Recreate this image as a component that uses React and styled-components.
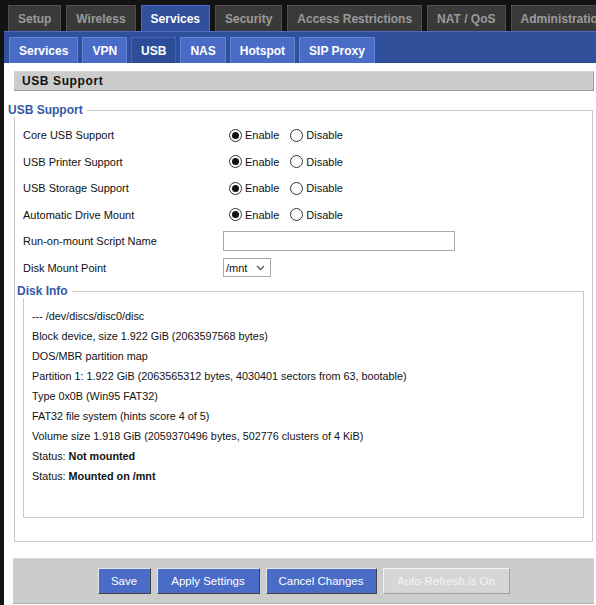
import React from 'react'
import styled, {createGlobalStyle} from 'styled-components'

const GlobalStyle = createGlobalStyle`
    html, body {
        margin: 0;
        padding: 0;
        background: #131313;
    }
    body {
        font-family: "Liberation Sans", Arial, sans-serif;
        font-size: 11px;
        color: #111;
    }
`

const topTabs = ['Setup', 'Wireless', 'Services', 'Security', 'Access Restrictions', 'NAT / QoS', 'Administration']
const subTabs = ['Services', 'VPN', 'USB', 'NAS', 'Hotspot', 'SIP Proxy']

const options = [
    'Core USB Support',
    'USB Printer Support',
    'USB Storage Support',
    'Automatic Drive Mount',
]

const diskLines = [
    ['--- /dev/discs/disc0/disc'],
    ['Block device, size 1.922 GiB (2063597568 bytes)'],
    ['DOS/MBR partition map'],
    ['Partition 1: 1.922 GiB (2063565312 bytes, 4030401 sectors from 63, bootable)'],
    ['Type 0x0B (Win95 FAT32)'],
    ['FAT32 file system (hints score 4 of 5)'],
    ['Volume size 1.918 GiB (2059370496 bytes, 502776 clusters of 4 KiB)'],
    ['Status: ', 'Not mounted'],
    ['Status: ', 'Mounted on /mnt'],
]

const buttons = [
    {text: 'Save', w: 53},
    {text: 'Apply Settings', w: 103},
    {text: 'Cancel Changes', w: 111},
    {text: 'Auto-Refresh is On', w: 127, off: true},
]

const Page = styled.div`
    padding-left: 4px;
    min-height: 605px;
    display: flex;
    flex-direction: column;
`

const TopBar = styled.nav`
    display: flex;
    gap: 5px;
    padding: 5px 0 0 4px;
    overflow: hidden;
    white-space: nowrap;
`

const TopTab = styled.div`
    flex: none;
    height: 25px;
    padding: 0 9px;
    display: flex;
    align-items: center;
    font-weight: bold;
    font-size: 12px;
    color: ${p => p.$active ? '#fff' : '#9a9a9a'};
    background: ${p => p.$active ? '#30509c' : '#3a3a3a'};
    border: 1px solid ${p => p.$active ? '#4a6cc7' : '#4e4e4e'};
    border-bottom: none;
    margin-bottom: ${p => p.$active ? -1 : 0}px;
    position: relative;
`

const SubBar = styled.nav`
    display: flex;
    gap: 4px;
    height: 32px;
    box-sizing: border-box;
    padding: 5px 0 0 5px;
    background: #30509c;
    border-top: 1px solid #4a6cc7;
`

const SubTab = styled.div`
    height: 26px;
    box-sizing: border-box;
    padding: 0 9px;
    display: flex;
    align-items: center;
    font-weight: bold;
    font-size: 12px;
    color: #fff;
    background: ${p => p.$active ? '#2e4d98' : '#4a6cc7'};
    border: 1px solid ${p => p.$active ? '#4464b8' : '#6283d6'};
    border-bottom: none;
`

const Main = styled.main`
    flex: 1;
    background: #fff;
    padding: 8px 2px 4px 10px;
    display: flex;
    flex-direction: column;
`

const Heading = styled.h2`
    margin: 0;
    height: 20px;
    box-sizing: border-box;
    padding-left: 8px;
    display: flex;
    align-items: center;
    background: #cccccc;
    border-top: 1px solid #d8d8d8;
    border-right: 1px solid #999;
    border-bottom: 1px solid #999;
    font-size: 12px;
    font-weight: bold;
    letter-spacing: 0.6px;
    color: #111;
`

const Fieldset = styled.fieldset`
    margin: ${p => p.$nested ? '3px 0 0 0' : '12px 1px 0 0'};
    padding: ${p => p.$nested ? '8px 8px 31px 8px' : '5px 8px 23px 8px'};
    border: 1px solid #c8c8c8;
    min-width: 0;
`

const Legend = styled.legend`
    margin-left: -15px;
    padding: 0 4px 0 0;
    font-size: 12px;
    font-weight: bold;
    color: #3458a8;
`

const Row = styled.div`
    display: flex;
    align-items: center;
    height: 26.5px;
`

const Label = styled.div`
    width: 200px;
    flex: none;
`

const RadioLabel = styled.label`
    display: inline-flex;
    align-items: center;
    margin-right: 5px;
`

const Radio = styled.input`
    appearance: none;
    margin: 0 3px 0 6px;
    width: 13px;
    height: 13px;
    box-sizing: border-box;
    border: 1px solid #333;
    border-radius: 50%;
    background: #fff;
    display: grid;
    place-items: center;
    &:checked::after {
        content: "";
        width: 7px;
        height: 7px;
        border-radius: 50%;
        background: #111;
    }
`

const TextInput = styled.input`
    width: 232px;
    height: 20px;
    box-sizing: border-box;
    border: 1px solid #a9a9a9;
    padding: 0 3px;
    font: inherit;
`

const SelectWrap = styled.div`
    position: relative;
    width: 48px;
    height: 19px;
`

const Select = styled.select`
    appearance: none;
    width: 100%;
    height: 100%;
    box-sizing: border-box;
    border: 1px solid #a9a9a9;
    background: #fff;
    padding: 0 0 0 2px;
    font: inherit;
    color: #111;
`

const Chevron = styled.svg`
    position: absolute;
    right: 6px;
    top: 7px;
    pointer-events: none;
`

const DiskLine = styled.div`
    line-height: 20px;
    white-space: nowrap;
    font-size: 10.8px;
    b {
        font-weight: bold;
    }
`

const ButtonBar = styled.div`
    margin: 16px 0 0 -1px;
    height: 44px;
    display: flex;
    align-items: center;
    justify-content: center;
    gap: 6px;
    background: #cccccc;
    border-top: 1px solid #dadada;
    border-bottom: 1px solid #b4b4b4;
`

const Button = styled.button`
    width: ${p => p.$w}px;
    height: 26px;
    padding: 0;
    font-family: "Liberation Sans", Arial, sans-serif;
    font-size: 11.5px;
    color: ${p => p.$off ? '#f4f4f4' : '#fff'};
    background: ${p => p.$off ? '#d6d6d6' : '#4a6cc7'};
    border: 1px solid;
    border-color: ${p => p.$off ? '#f2f2f2 #a0a0a0 #a0a0a0 #f2f2f2' : '#e6e6e6 #444 #444 #e6e6e6'};
`

const App = () => {
    return (
        <>
            <GlobalStyle/>
            <Page>
                <TopBar>
                    {topTabs.map(t => (
                        <TopTab key={t} $active={t === 'Services'}>{t}</TopTab>
                    ))}
                </TopBar>
                <SubBar>
                    {subTabs.map(t => (
                        <SubTab key={t} $active={t === 'USB'}>{t}</SubTab>
                    ))}
                </SubBar>
                <Main>
                    <Heading>USB Support</Heading>
                    <Fieldset>
                        <Legend>USB Support</Legend>
                        {options.map(o => (
                            <Row key={o}>
                                <Label>{o}</Label>
                                <RadioLabel>
                                    <Radio type="radio" name={o} defaultChecked/>Enable
                                </RadioLabel>
                                <RadioLabel>
                                    <Radio type="radio" name={o}/>Disable
                                </RadioLabel>
                            </Row>
                        ))}
                        <Row>
                            <Label>Run-on-mount Script Name</Label>
                            <TextInput type="text"/>
                        </Row>
                        <Row>
                            <Label>Disk Mount Point</Label>
                            <SelectWrap>
                                <Select defaultValue="/mnt">
                                    <option>/mnt</option>
                                </Select>
                                <Chevron width="9" height="6" viewBox="0 0 9 6">
                                    <path d="M1 1l3.5 3.5L8 1" fill="none" stroke="#555" strokeWidth="1.3"/>
                                </Chevron>
                            </SelectWrap>
                        </Row>
                        <Fieldset $nested>
                            <Legend>Disk Info</Legend>
                            {diskLines.map((l, i) => (
                                <DiskLine key={i}>
                                    {l[0]}{l[1] && <b>{l[1]}</b>}
                                </DiskLine>
                            ))}
                        </Fieldset>
                    </Fieldset>
                    <ButtonBar>
                        {buttons.map(b => (
                            <Button key={b.text} $w={b.w} $off={b.off}>{b.text}</Button>
                        ))}
                    </ButtonBar>
                </Main>
            </Page>
        </>
    )
}

export default App
